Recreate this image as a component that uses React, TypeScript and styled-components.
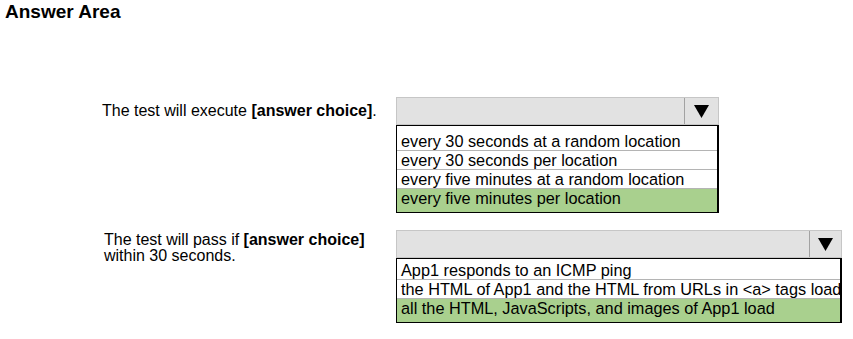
import React from "react";
import styled, { createGlobalStyle } from "styled-components";

const GlobalStyle = createGlobalStyle`
  html, body {
    margin: 0;
    padding: 0;
    background: #fff;
  }
  body {
    font-family: "Liberation Sans", Arial, sans-serif;
    color: #000;
  }
`;

type Question = {
  id: string;
  indent: number;
  label: React.ReactNode;
  width: number;
  arrowWidth: number;
  firstPad: number;
  options: string[];
  answer: number;
};

const questions: Question[] = [
  {
    id: "q1",
    indent: 102,
    label: (
      <>
        The test will execute <b>[answer choice]</b>.
      </>
    ),
    width: 323,
    arrowWidth: 33,
    firstPad: 6,
    options: [
      "every 30 seconds at a random location",
      "every 30 seconds per location",
      "every five minutes at a random location",
      "every five minutes per location",
    ],
    answer: 3,
  },
  {
    id: "q2",
    indent: 104,
    label: (
      <>
        The test will pass if <b>[answer choice]</b>
        <br />
        within 30 seconds.
      </>
    ),
    width: 446,
    arrowWidth: 31,
    firstPad: 2,
    options: [
      "App1 responds to an ICMP ping",
      "the HTML of App1 and the HTML from URLs in <a> tags load",
      "all the HTML, JavaScripts, and images of App1 load",
    ],
    answer: 2,
  },
];

export default function App() {
  return (
    <>
      <GlobalStyle />
      <Page>
        <Title>Answer Area</Title>
        <Questions>
          {questions.map((q, qi) => (
            <Row key={q.id} $indent={q.indent}>
              <Label $single={qi === 0}>{q.label}</Label>
              <Dropdown $width={q.width}>
                <Header>
                  <Field />
                  <ArrowCell $width={q.arrowWidth}>
                    <svg width="15" height="13" viewBox="0 0 15 13">
                      <polygon points="0,0 15,0 7.5,13" fill="#000" />
                    </svg>
                  </ArrowCell>
                </Header>
                <List>
                  {q.options.map((o, i) => (
                    <Item
                      key={o}
                      $selected={i === q.answer}
                      $padTop={i === 0 ? q.firstPad : 0}
                      $last={i === q.options.length - 1}
                    >
                      {o}
                    </Item>
                  ))}
                </List>
              </Dropdown>
            </Row>
          ))}
        </Questions>
      </Page>
    </>
  );
}

const Page = styled.div`
  width: 853px;
  height: 339px;
  overflow: hidden;
`;

const Title = styled.h1`
  margin: 0;
  padding: 1px 5px 0;
  font-size: 19px;
  font-weight: bold;
`;

const Questions = styled.div`
  display: flex;
  flex-direction: column;
  gap: 17px;
  margin-top: 74px;
`;

const Row = styled.div<{ $indent: number }>`
  display: flex;
  align-items: flex-start;
  padding-left: ${(p) => p.$indent}px;
`;

const Label = styled.div<{ $single: boolean }>`
  width: ${(p) => (p.$single ? 294 : 292)}px;
  font-size: 16px;
  line-height: ${(p) => (p.$single ? "28px" : "16px")};
  padding-top: ${(p) => (p.$single ? 0 : 2)}px;
  b {
    font-weight: bold;
  }
`;

const Dropdown = styled.div<{ $width: number }>`
  width: ${(p) => p.$width}px;
  display: flex;
  flex-direction: column;
`;

const Header = styled.div`
  display: flex;
  height: 28px;
  box-sizing: border-box;
  border: 1px solid #c6c6c6;
  background: #e2e2e2;
`;

const Field = styled.div`
  flex: 1;
`;

const ArrowCell = styled.div<{ $width: number }>`
  width: ${(p) => p.$width}px;
  border-left: 1px solid #a2a2a2;
  display: flex;
  align-items: center;
  justify-content: center;
  padding-top: 1px;
`;

const List = styled.div`
  border: 1px solid #000;
  border-right-width: 2px;
  display: flex;
  flex-direction: column;
`;

const Item = styled.div<{ $selected: boolean; $padTop: number; $last: boolean }>`
  font-size: 16.3px;
  line-height: 18px;
  padding: ${(p) => p.$padTop}px 4px ${(p) => (p.$last ? 5 : 0)}px 4px;
  white-space: nowrap;
  background: ${(p) => (p.$selected ? "#a9d08e" : "#fff")};
  border-bottom: ${(p) => (p.$last ? "none" : "1px solid #b4b4b4")};
`;
